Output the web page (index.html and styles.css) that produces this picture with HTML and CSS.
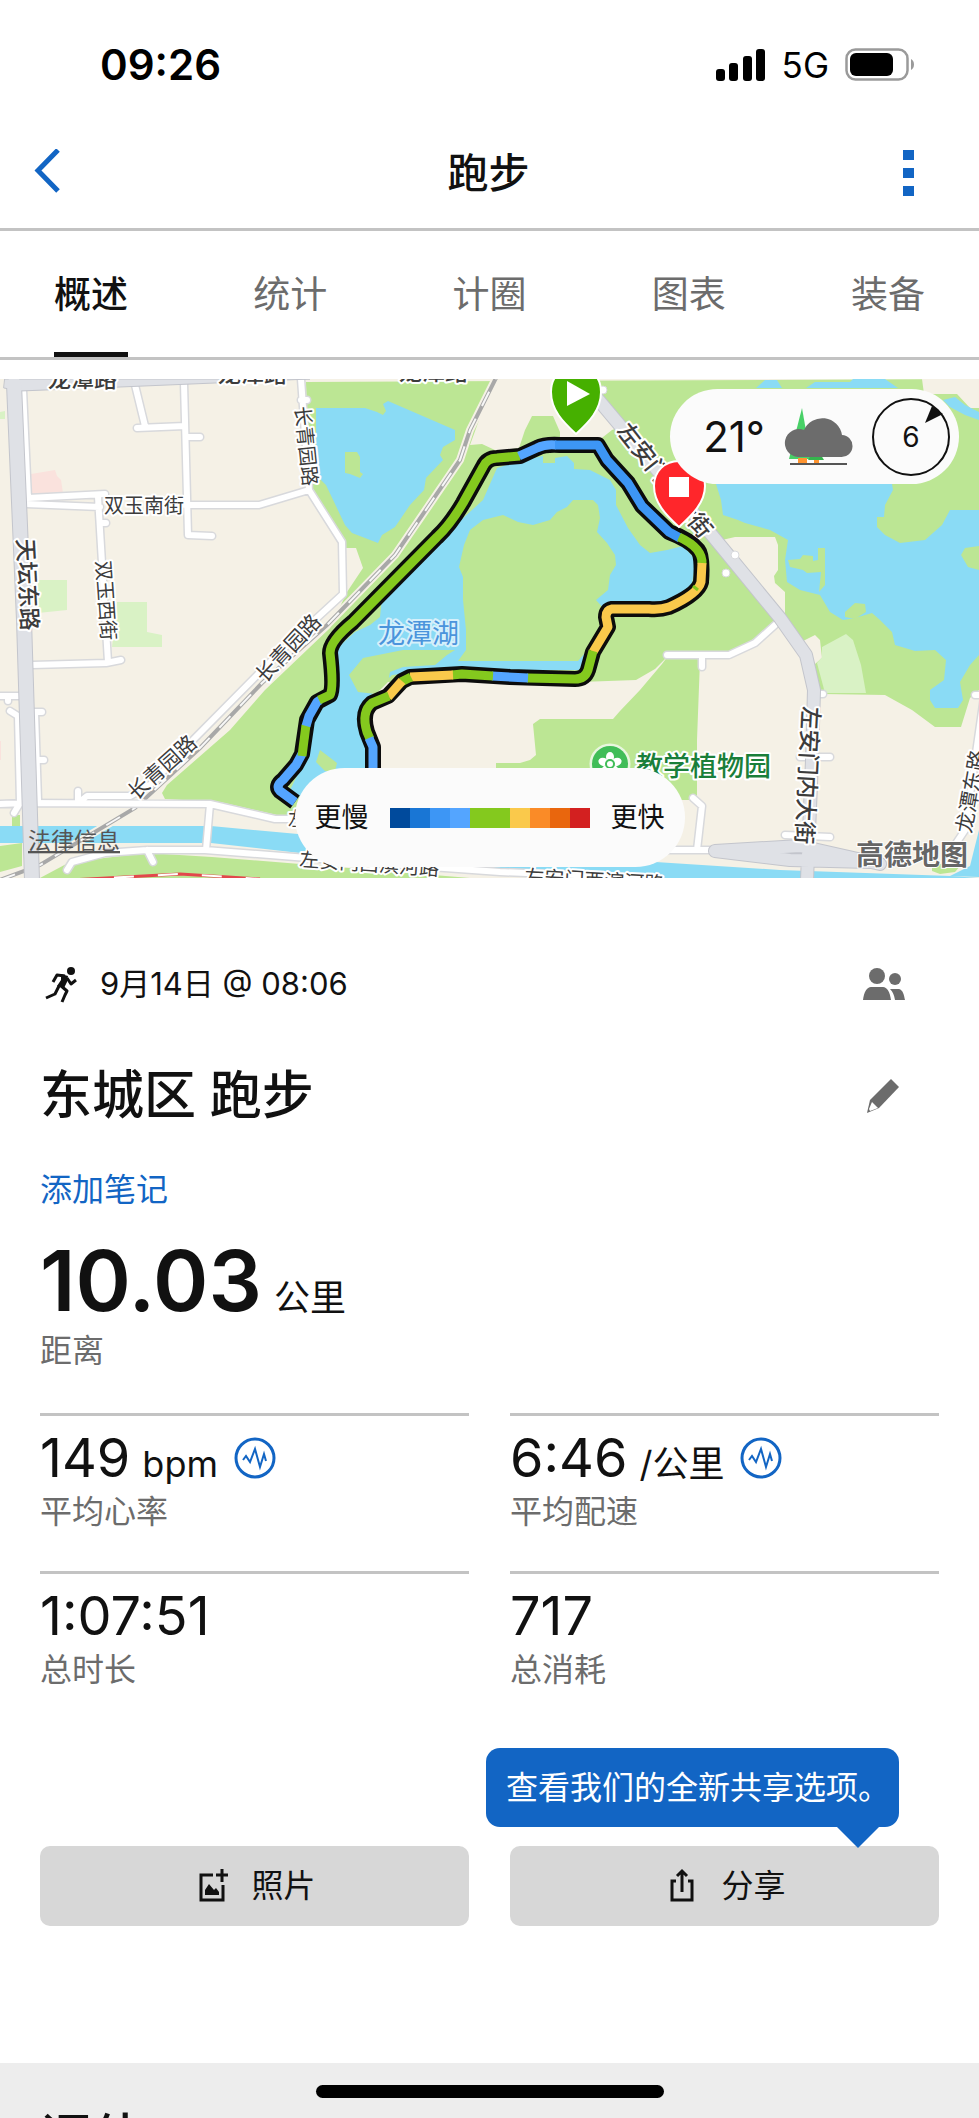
FILE: index.html
```html
<!DOCTYPE html>
<html lang="zh-CN">
<head>
    <meta charset="UTF-8">
    <meta name="viewport" content="width=device-width, initial-scale=1.0">
    <title>跑步</title>
    <link rel="stylesheet" href="styles.css">
</head>
<body>
    <div class="app">
        <div class="status-bar">
            <span class="time">09:26</span>
            <div class="status-icons">
                <svg width="50" height="32" viewBox="0 0 50 32">
                    <rect x="0" y="20" width="9" height="12" rx="3"/>
                    <rect x="13" y="14" width="9" height="18" rx="3"/>
                    <rect x="27" y="7" width="9" height="25" rx="3"/>
                    <rect x="40" y="0" width="9" height="32" rx="3"/>
                </svg>
                <span class="network">5G</span>
                <svg width="70" height="34" viewBox="0 0 70 34">
                    <rect x="1.5" y="1.5" width="61" height="30" rx="9" fill="none" stroke="#9a9a9a" stroke-width="2.5"/>
                    <rect x="5" y="5" width="43" height="23" rx="6"/>
                    <path d="M66 11c4 2 4 9 0 11z" fill="#9a9a9a"/>
                </svg>
            </div>
        </div>

        <header class="navbar">
            <button type="button" class="icon-btn" aria-label="返回">
                <svg width="28" height="48" viewBox="0 0 28 48"><path d="M26 1L6 21.500L26 42" fill="none" stroke="#1265c4" stroke-width="5"/></svg>
            </button>
            <h1>跑步</h1>
            <button type="button" class="icon-btn" aria-label="更多">
                <svg width="12" height="48" viewBox="0 0 12 48" fill="#1265c4"><path d="M0 1h11v10H0zM0 19h11v10H0zM0 37h11v10H0z"/></svg>
            </button>
        </header>

        <nav class="tabs">
            <a href="#overview" class="active">概述</a>
            <a href="#stats">统计</a>
            <a href="#laps">计圈</a>
            <a href="#charts">图表</a>
            <a href="#gear">装备</a>
        </nav>

        <section class="map">
            <svg class="map-canvas" viewBox="0 379 979 499">
                <rect x="0" y="379" width="979" height="499" fill="#f5f1e6"/>

                <!-- parks -->
                <g fill="#bce694">
                    <path d="M306 382L979 379V690L970 698L961 727H935L912 710L885 695L823 694L790 640L778 622L730 655L700 660L697 740V800H600V822L320 820L290 818L220 802L165 799L162 793L167 785L230 730L265 690L330 628L347 592L363 568L356 548H345L318 500L309 485Z"/>
                    <path d="M0 846L22 843L22 866L0 872ZM12 815H20V826H12Z"/>
                    <path d="M40 878L70 862L147 853L212 857L300 864L470 878Z"/>
                </g>
                <g fill="#d9f2c5">
                    <path d="M38 580H67V610L38 613ZM117 602H147V632L162 635V647H112ZM0 412L5 411V419H0Z"/>
                </g>
                <path d="M31 474L55 470L57 476L61 480L63 493L32 494ZM0 741H1V760H0Z" fill="#fae2dd"/>
                <g fill="#f5f1e6">
                    <path d="M494 379H575L620 427L612 430L598 441L560 441V432L553 416H532L525 430L519 448L497 451L482 444L470 445Z"/>
                    <path d="M372 682H580L636 680L655 669L668 656L662 664L640 690L620 711L613 719H540L533 724L536 755L530 760L520 763H496V820H372Z"/>
                    <path d="M722 540L735 537H775L778 545V570L774 576L775 583L785 592V614Z"/>
                    <path d="M922 379H979V408H970L957 394H924ZM803 641L815 635L820 640L822 658L815 664Z"/>
                </g>
                <path d="M817 663L822 657V647L846 634L853 640L861 665L866 693H825Z" fill="#d9f2c5"/>

                <!-- lakes and canal -->
                <g fill="#8adbf5">
                    <path d="M316 408H365L377 412L383 415L386 411L383 404L388 401L455 430V440L443 447L440 455L443 460L426 478L424 490L410 505L395 527L382 535L378 543L352 533L345 525L326 485L316 475Z"/>
                    <path d="M497 468L520 461L543 456V463H555V458L567 456L574 463V469L590 470L610 480L616 490V505L628 528L640 545L650 553L667 550L683 546L696 560L690 595L665 610H605L596 600L608 590L610 575L616 565L615 555L607 543L597 532L600 518L598 505L593 500H573L567 507L557 512L550 520L533 525L518 522L503 515L495 517L483 520L470 530L464 545L459 567L463 577V600L466 630V650L458 661H578L592 645L600 628L605 632L583 670H440L392 675L366 700V745L373 768V810H320L290 790L305 760L312 720L332 697L335 650L355 632L370 625L380 617L382 597L420 565L450 530L483 500Z"/>
                    <path d="M716 484H892L893 490L885 505L884 517H877V527L885 535L900 543L925 540L942 525L950 510H979V655L970 665L960 682L963 700L958 708H935L930 700V690L944 680L946 660L935 650L915 651L895 645L892 632L880 620L872 613L855 618L843 620L830 612L820 595L812 593L800 590L787 582L785 560L788 540L770 530L745 523L738 520L723 515L721 500Z"/>
                    <path d="M756 388L765 380H777L782 388ZM806 388L815 382H850L853 379H885L898 388ZM943 400L955 397L965 405L979 412V420L965 415L950 407Z"/>
                    <path d="M0 826H211L320 836L640 861L780 870L979 877V878H560L300 853L211 843L0 843ZM979 830L970 866L950 876L979 878Z"/>
                </g>
                <g fill="#bce694">
                    <path d="M345 452H357L360 457V472L363 474L360 478L350 474L345 473Z"/>
                    <path d="M349 675L363 658L378 655L403 650H455L447 655L435 665L403 667L390 672L388 682L376 694L358 692ZM320 750L337 763L335 771L325 771L316 762Z"/>
                    <path d="M788 560L800 559L803 555L813 556V561L818 560V548H825V585L819 592L821 572L807 573L803 570L790 567ZM979 546L965 548L961 555L968 567L979 570ZM845 612L855 603L865 604L866 612L855 619L845 617Z"/>
                    <path d="M932 864H962L955 872L940 874L932 871Z"/>
                </g>

                <!-- railway -->
                <path d="M0 880L40 865L135 808L200 748L262 683L327 625L395 555L460 460L470 430L497 376" fill="none" stroke="#f5f1e6" stroke-width="8"/>
                <path d="M0 880L40 865L135 808L200 748L262 683L327 625L395 555L460 460L470 430L497 376" fill="none" stroke="#a8a8a8" stroke-width="4"/>
                <path d="M0 880L40 865L135 808L200 748L262 683L327 625L395 555L460 460L470 430L497 376" fill="none" stroke="#f7f7f7" stroke-width="2" stroke-dasharray="16 14"/>
                <path d="M70 880L180 874L260 879" fill="none" stroke="#e2474c" stroke-width="3"/>
                <path d="M70 880L180 874L260 879" fill="none" stroke="#fff" stroke-width="2" stroke-dasharray="20 24"/>

                <!-- side streets: grey casing under white -->
                <g fill="none" stroke-linecap="round" stroke-linejoin="round">
                    <path d="M23 390L28 498L105 494M26 504L100 507M98 497L108 662M135 385L145 426M137 428L185 426M184 383L188 535L212 536M187 437H200M185 505H259L309 490L301 379M301 400H307M309 490L342 542L343 594L280 652L195 738L150 785L130 796H87L78 803V791M100 523H106M32 665L106 663L121 660M0 696H19M8 696V701M10 711L18 716L20 803L14 813M35 712H42M35 712L38 800M37 760H44M0 804L25 803L210 804L275 819H320M210 804L206 850M67 870L72 862L105 853L147 850L205 850L320 859L500 872L650 878M147 850L153 862M667 655H729L755 643L775 625M702 655V667M693 798L702 806L697 850M660 850H715M975 695H979M985 690L965 830L955 845M785 835L830 837M800 757H830M814 694H823" stroke="#d8d9dc" stroke-width="9"/>
                    <path d="M23 390L28 498L105 494M26 504L100 507M98 497L108 662M135 385L145 426M137 428L185 426M184 383L188 535L212 536M187 437H200M185 505H259L309 490L301 379M301 400H307M309 490L342 542L343 594L280 652L195 738L150 785L130 796H87L78 803V791M100 523H106M32 665L106 663L121 660M0 696H19M8 696V701M10 711L18 716L20 803L14 813M35 712H42M35 712L38 800M37 760H44M0 804L25 803L210 804L275 819H320M210 804L206 850M67 870L72 862L105 853L147 850L205 850L320 859L500 872L650 878M147 850L153 862M667 655H729L755 643L775 625M702 655V667M693 798L702 806L697 850M660 850H715M975 695H979M985 690L965 830L955 845M785 835L830 837M800 757H830M814 694H823" stroke="#fff" stroke-width="6"/>
                    <!-- main roads -->
                    <path d="M14 384L24 620L32 880" stroke="#c3c5cc" stroke-width="16"/>
                    <path d="M575 372L711 534L780 618L806 655L814 690L812 760L807 880M715 851L800 846L880 864M715 851L790 860L870 862" stroke="#c3c5cc" stroke-width="14"/>
                    <path d="M5 379H310L120 387L20 391L4 388Z" fill="#dfe1e6" stroke="#c3c5cc"/>
                    <path d="M14 384L24 620L32 880" stroke="#dfe1e6" stroke-width="14"/>
                    <path d="M575 372L711 534L780 618L806 655L814 690L812 760L807 880M715 851L800 846L880 864M715 851L790 860L870 862" stroke="#dfe1e6" stroke-width="12"/>
                </g>
                <g fill="#fff" stroke="#d8d9dc">
                    <circle cx="735" cy="555" r="4"/>
                    <circle cx="726" cy="573" r="4"/>
                    <circle cx="603" cy="390" r="4"/>
                </g>

                <!-- place names -->
                <g class="map-label">
                    <text x="48" y="387" font-size="23" font-weight="500">龙潭路</text>
                    <text x="218" y="382" font-size="23" font-weight="500">龙潭路</text>
                    <text x="399" y="380" font-size="23" font-weight="500">龙潭路</text>
                    <text x="104" y="513" font-size="20">双玉南街</text>
                    <text transform="translate(295 407) rotate(84)" font-size="20">长青园路</text>
                    <text transform="translate(17 539) rotate(87)" font-size="23" font-weight="500">天坛东路</text>
                    <text transform="translate(96 561) rotate(86)" font-size="20">双玉西街</text>
                    <text transform="translate(265 684) rotate(-47)" font-size="21">长青园路</text>
                    <text transform="translate(136 801) rotate(-42)" font-size="21">长青园路</text>
                    <text transform="translate(616 431) rotate(52)" font-size="23" font-weight="500">左安门内大街</text>
                    <text transform="translate(803 706) rotate(93)" font-size="23" font-weight="500">左安门内大街</text>
                    <text transform="translate(971 834) rotate(-80)" font-size="21">龙潭东路</text>
                    <text x="288" y="826" font-size="19">左</text>
                    <text transform="translate(299 866) rotate(4)" font-size="20">左安门西滨河路</text>
                    <text transform="translate(524 884) rotate(3)" font-size="20">左安门西滨河路</text>
                </g>
                <text class="map-label lake" x="378" y="643" font-size="27">龙潭湖</text>
                <circle cx="610" cy="764" r="19" fill="#bfe3b4" stroke="#e8f6df" stroke-width="3"/>
                <circle cx="610" cy="764" r="18" fill="#40bd58"/>
                <g fill="#fff">
                    <ellipse cx="610" cy="757" rx="4" ry="5"/>
                    <ellipse cx="610" cy="757" rx="4" ry="5" transform="rotate(72 610 764)"/>
                    <ellipse cx="610" cy="757" rx="4" ry="5" transform="rotate(144 610 764)"/>
                    <ellipse cx="610" cy="757" rx="4" ry="5" transform="rotate(216 610 764)"/>
                    <ellipse cx="610" cy="757" rx="4" ry="5" transform="rotate(288 610 764)"/>
                    <circle cx="610" cy="764" r="4" stroke="#40bd58" stroke-width="2"/>
                </g>
                <text class="map-label garden" x="636" y="776" font-size="27">教学植物园</text>
                <a href="#legal"><text class="legal" x="28" y="849" font-size="23">法律信息</text></a>
                <text class="map-brand" x="856" y="865" font-size="28">高德地图</text>

                <!-- track, coloured by pace -->
                <g fill="none" stroke-linejoin="round">
                    <path d="M295 802L280 791Q275 786 283 780L296 765L302 754L307 720L317 702L330 695Q334 688 330 653Q330 641 353 622L437 537Q450 525 463 503L483 467Q487 458 497 458L520 456L537 448Q545 444 560 445H598L607 460L628 483L642 506L669 532Q690 540 698 550Q703 556 701 582Q698 594 669 607Q660 610 649 609H612Q606 610 606 617L608 627L593 652L588 670Q585 679 575 679L510 677L462 674L410 677L402 681L388 696L372 703Q361 712 367 732L373 747V790" stroke="#0c0c0c" stroke-width="16"/>
                    <g stroke-width="9">
                        <path d="M295 802L280 791Q275 786 283 780L296 765L302 754" stroke="#54a5ff"/>
                        <path d="M302 756L306 725" stroke="#84c91e"/>
                        <path d="M306 726L309 716L317 702L320 700" stroke="#54a5ff"/>
                        <path d="M319 700L330 695Q334 688 330 653Q330 641 353 622L437 537Q450 525 463 503L483 467Q487 458 497 458L520 456" stroke="#84c91e"/>
                        <path d="M519 456L537 448Q545 444 556 445" stroke="#54a5ff"/>
                        <path d="M555 445H598L607 460L628 483L642 506L669 532L680 538" stroke="#3d96f5"/>
                        <path d="M679 537Q703 548 702 564" stroke="#84c91e"/>
                        <path d="M702 563L701 582Q698 594 669 607Q660 610 649 609H612Q606 610 606 617L608 627L593 652" stroke="#fac94b"/>
                        <path d="M593 651L588 670Q585 679 575 679L527 678" stroke="#84c91e"/>
                        <path d="M528 678L492 676" stroke="#54a5ff"/>
                        <path d="M493 676L462 674L452 675" stroke="#84c91e"/>
                        <path d="M453 675L410 677" stroke="#fac94b"/>
                        <path d="M411 677L401 682" stroke="#84c91e"/>
                        <path d="M402 681L388 697" stroke="#fac94b"/>
                        <path d="M389 696L372 703Q361 712 367 732L370 739" stroke="#84c91e"/>
                        <path d="M369 738L373 747V790" stroke="#54a5ff"/>
                        <path d="M693 586L698 590" stroke="#84c91e" stroke-width="3"/>
                    </g>
                </g>

                <!-- start and stop pins -->
                <path d="M576 434C563 422 551 410 551 392C551 376 562 367 576 367C590 367 601 376 601 392C601 410 589 422 576 434Z" fill="#46b000" stroke="#fff" stroke-width="2"/>
                <path d="M567 381L590 394L567 406Z" fill="#fff"/>
                <path d="M679 527C666 515 654 503 654 486C654 471 665 461 679 461C693 461 705 471 705 486C705 503 692 515 679 527Z" fill="#ff262b" stroke="#fff" stroke-width="2"/>
                <rect x="669" y="477" width="20" height="20" fill="#fff"/>
            </svg>

            <div class="weather">
                <span class="temperature">21°</span>
                <svg width="70" height="60" viewBox="0 0 70 60">
                    <path d="M19 1L28 52H6Z" fill="#48d067"/>
                    <path d="M25 53L33 40L41 53Z" fill="#35b54d"/>
                    <path d="M15 51H24V57H15ZM31 53H36V57H31Z" fill="#ff9430"/>
                    <path d="M15 50A14 14 0 1 1 21 23A20 20 0 0 1 59 28A11 11 0 0 1 58 50Z" fill="#6c6c6c"/>
                    <path d="M7 57H64" stroke="#555" stroke-width="2"/>
                </svg>
                <svg class="wind" width="80" height="80" viewBox="0 0 80 80">
                    <circle cx="40" cy="40" r="38" fill="none" stroke="#111" stroke-width="2"/>
                    <path d="M54 26L61 9L72 17Z" fill="#111"/>
                    <text x="40" y="50" text-anchor="middle">6</text>
                </svg>
            </div>

            <div class="legend">
                <span>更慢</span>
                <div class="legend-bar">
                    <i class="pace-1"></i>
                    <i class="pace-2"></i>
                    <i class="pace-3"></i>
                    <i class="pace-4"></i>
                    <i class="pace-5"></i>
                    <i class="pace-5"></i>
                    <i class="pace-6"></i>
                    <i class="pace-7"></i>
                    <i class="pace-8"></i>
                    <i class="pace-9"></i>
                </div>
                <span>更快</span>
            </div>
        </section>

        <main class="details">
            <div class="row date-row">
                <div class="date">
                    <svg width="40" height="40" viewBox="0 0 40 40" fill="none" stroke="#111" stroke-linejoin="round">
                        <circle cx="31" cy="7" r="4" fill="#111" stroke="none"/>
                        <path d="M25 12L17 11L13 18M27 14L31 20L36 16" stroke-width="3"/>
                        <path d="M21 10L28 12L27 18L24 24L17 22L21 16Z" fill="#111" stroke="none"/>
                        <path d="M20 21L27 27L25 31L22 38" stroke-width="3"/>
                        <path d="M19 22L15 30L6 34" stroke-width="3"/>
                    </svg>
                    <span>9月14日 @ 08:06</span>
                </div>
                <button type="button" class="icon-btn" aria-label="隐私">
                    <svg width="44" height="36" viewBox="0 0 44 36" fill="#6c6c6c">
                        <circle cx="14" cy="10" r="8"/>
                        <circle cx="32" cy="13" r="6"/>
                        <path d="M0 34C1 26 4 21 8 21H20C24 21 27 26 28 34ZM27 23H36C40 24 41 29 42 34H32C31 29 30 26 27 23Z"/>
                    </svg>
                </button>
            </div>

            <div class="row title-row">
                <h2>东城区 跑步</h2>
                <button type="button" class="icon-btn" aria-label="编辑">
                    <svg width="44" height="36" viewBox="0 0 44 36">
                        <path d="M4 35L7 22L28 1L36 9L16 30Z" fill="#6c6c6c"/>
                        <path d="M9 24L15 30L7 33L6 31Z" fill="#fff"/>
                    </svg>
                </button>
            </div>

            <a href="#note" class="note-link">添加笔记</a>

            <div class="distance">
                <div class="distance-value">10.03 <span class="unit">公里</span></div>
                <div class="label">距离</div>
            </div>

            <div class="stats">
                <div class="stat">
                    <div class="value">149 <span class="unit">bpm</span>
                        <svg class="pulse" width="42" height="42" viewBox="0 0 42 42" fill="none" stroke="#1265c4"><circle cx="21" cy="21" r="19" stroke-width="3"/><path d="M9 23L12 19L16 25L21 12L26 30L30 17L32 24" stroke-width="2"/></svg>
                    </div>
                    <div class="label">平均心率</div>
                </div>
                <div class="stat">
                    <div class="value">6:46 <span class="unit">/公里</span>
                        <svg class="pulse" width="42" height="42" viewBox="0 0 42 42" fill="none" stroke="#1265c4"><circle cx="21" cy="21" r="19" stroke-width="3"/><path d="M9 23L12 19L16 25L21 12L26 30L30 17L32 24" stroke-width="2"/></svg>
                    </div>
                    <div class="label">平均配速</div>
                </div>
                <div class="stat">
                    <div class="value">1:07:51</div>
                    <div class="label">总时长</div>
                </div>
                <div class="stat">
                    <div class="value">717</div>
                    <div class="label">总消耗</div>
                </div>
            </div>

            <div class="actions">
                <button type="button" class="btn">
                    <svg width="36" height="36" viewBox="0 0 36 36">
                        <path d="M20 7H8V32H30V17" fill="none" stroke="#111" stroke-width="3"/>
                        <path d="M29 1V14M23 7H35" stroke="#111" stroke-width="3"/>
                        <path d="M12 27V22L16 16L21 22L23 20L26 24V27Z" fill="#111"/>
                    </svg>
                    照片
                </button>
                <div class="share">
                    <div class="tooltip">查看我们的全新共享选项。</div>
                    <button type="button" class="btn">
                        <svg width="36" height="36" viewBox="0 0 36 36" fill="none" stroke="#111" stroke-width="3">
                            <path d="M13 13H9V32H29V13H25M19 24V4M14 8L19 3L24 8"/>
                        </svg>
                        分享
                    </button>
                </div>
            </div>
        </main>

        <section class="next-section">
            <h2>评估</h2>
        </section>
        <div class="home-indicator"></div>
    </div>
</body>
</html>
```

FILE: styles.css
```css
* {
    margin: 0;
    padding: 0;
    box-sizing: border-box;
    font-family: Inter, "Noto Sans CJK SC", sans-serif;
}

body {
    background: #fff;
    color: #111;
}

.app {
    position: relative;
    height: 100vh;
    overflow: hidden;
    display: flex;
    flex-direction: column;
}

.app > * {
    flex-shrink: 0;
}

svg {
    display: block;
}

button {
    border: none;
    background: none;
    color: inherit;
    cursor: pointer;
}

a {
    text-decoration: none;
}

/* status bar */
.status-bar {
    display: flex;
    justify-content: space-between;
    align-items: center;
    padding: 41px 64px 28px 100px;
    line-height: 48px;
    color: #000;
}

.time {
    font-size: 42px;
    font-weight: 600;
}

.status-icons {
    display: flex;
    align-items: center;
    gap: 16px;
}

.network {
    font-size: 35px;
}

/* header */
.navbar {
    display: grid;
    grid-template-columns: 1fr auto 1fr;
    align-items: center;
    height: 114px;
    padding: 0 64px 0 32px;
    border-bottom: 3px solid #c3c3c3;
}

.navbar h1 {
    padding-left: 30px;
    font-size: 41px;
    font-weight: 500;
    line-height: 60px;
}

.navbar .icon-btn:last-child {
    justify-self: end;
}

.tabs {
    display: flex;
    justify-content: space-between;
    padding: 0 54px;
    border-bottom: 3px solid #c3c3c3;
}

.tabs a {
    height: 126px;
    line-height: 128px;
    font-size: 37px;
    color: #6c6c6c;
}

.tabs .active {
    color: #111;
    font-weight: 500;
    border-bottom: 5px solid #111;
}

/* map */
.map {
    position: relative;
    margin-top: 19px;
}

.map-canvas {
    width: 100%;
    height: auto;
}

.map-label {
    fill: #3c3c3c;
    stroke: #fff;
    stroke-width: 4px;
    stroke-linejoin: round;
    paint-order: stroke;
}

.lake {
    fill: #4b94dc;
    stroke: #d5f0fb;
}

.garden {
    fill: #1a7f3a;
    font-weight: 500;
}

.legal {
    fill: #555;
    text-decoration: underline;
}

.map-brand {
    fill: #666;
    font-weight: 700;
    stroke: #fff;
    stroke-width: 2px;
    paint-order: stroke;
}

.weather {
    position: absolute;
    top: 10px;
    right: 20px;
    height: 95px;
    display: flex;
    align-items: center;
    gap: 18px;
    padding: 0 8px 0 33px;
    border-radius: 48px;
    background: #fbfbfb;
}

.temperature {
    font-size: 42px;
}

.wind text {
    font-size: 28px;
    fill: #111;
}

.legend {
    position: absolute;
    bottom: 11px;
    left: 50%;
    transform: translateX(-50%);
    height: 99px;
    display: flex;
    align-items: center;
    gap: 21px;
    padding: 0 20px;
    border-radius: 50px;
    background: #fbfbfb;
    font-size: 27px;
    line-height: 36px;
    white-space: nowrap;
}

.legend-bar {
    display: flex;
}

.legend-bar i {
    width: 20px;
    height: 20px;
}

.pace-1 { background: #004a9c; }
.pace-2 { background: #1976d5; }
.pace-3 { background: #3d96f5; }
.pace-4 { background: #54a5ff; }
.pace-5 { background: #84c91e; }
.pace-6 { background: #fac94b; }
.pace-7 { background: #fa8b27; }
.pace-8 { background: #e9660d; }
.pace-9 { background: #d32020; }

/* activity details */
.details {
    padding: 82px 40px 137px;
}

.row {
    display: flex;
    justify-content: space-between;
    align-items: center;
    padding-right: 32px;
}

.date-row {
    height: 48px;
}

.date {
    display: flex;
    align-items: center;
    gap: 20px;
    font-size: 31px;
    line-height: 40px;
}

.title-row {
    height: 72px;
    margin-top: 52px;
}

.title-row h2,
.next-section h2 {
    font-size: 52px;
    font-weight: 500;
    line-height: 64px;
}

.note-link {
    display: block;
    margin-top: 36px;
    font-size: 32px;
    line-height: 44px;
    color: #1265c4;
}

.distance {
    margin-top: 19px;
}

.distance-value {
    display: flex;
    align-items: baseline;
    gap: 12px;
    font-size: 84px;
    font-weight: 600;
    line-height: 100px;
}

.unit {
    font-size: 36px;
    font-weight: 400;
    line-height: 44px;
}

.label {
    font-size: 32px;
    line-height: 40px;
    color: #6c6c6c;
}

.stats {
    display: grid;
    grid-template-columns: 1fr 1fr;
    gap: 39px 41px;
    margin-top: 42px;
}

.stat {
    padding-top: 8px;
    border-top: 3px solid #c3c3c3;
}

.value {
    display: flex;
    align-items: baseline;
    gap: 12px;
    font-size: 54px;
    line-height: 68px;
}

.pulse {
    margin-left: 4px;
    align-self: center;
}

.actions {
    display: grid;
    grid-template-columns: 1fr 1fr;
    gap: 41px;
    margin-top: 156px;
}

.btn {
    width: 100%;
    height: 80px;
    display: flex;
    justify-content: center;
    align-items: center;
    gap: 22px;
    border-radius: 10px;
    background: #d7d7d7;
    font-size: 32px;
    line-height: 40px;
}

.share {
    position: relative;
}

.tooltip {
    position: absolute;
    right: 40px;
    bottom: 99px;
    padding: 0 9px 0 20px;
    border-radius: 14px;
    background: #1265c4;
    color: #fff;
    font-size: 32px;
    line-height: 79px;
    white-space: nowrap;
}

.tooltip::after {
    content: "";
    position: absolute;
    top: 100%;
    right: 20px;
    border: 21px solid transparent;
    border-top-color: #1265c4;
    border-bottom: none;
}

.next-section {
    flex: 1 0 54px;
    height: 54px;
    padding: 44px 40px 0;
    background: #ededed;
    overflow: hidden;
}

.home-indicator {
    position: absolute;
    left: 50%;
    bottom: 20px;
    width: 348px;
    height: 13px;
    transform: translateX(-50%);
    border-radius: 7px;
    background: #000;
}
```
